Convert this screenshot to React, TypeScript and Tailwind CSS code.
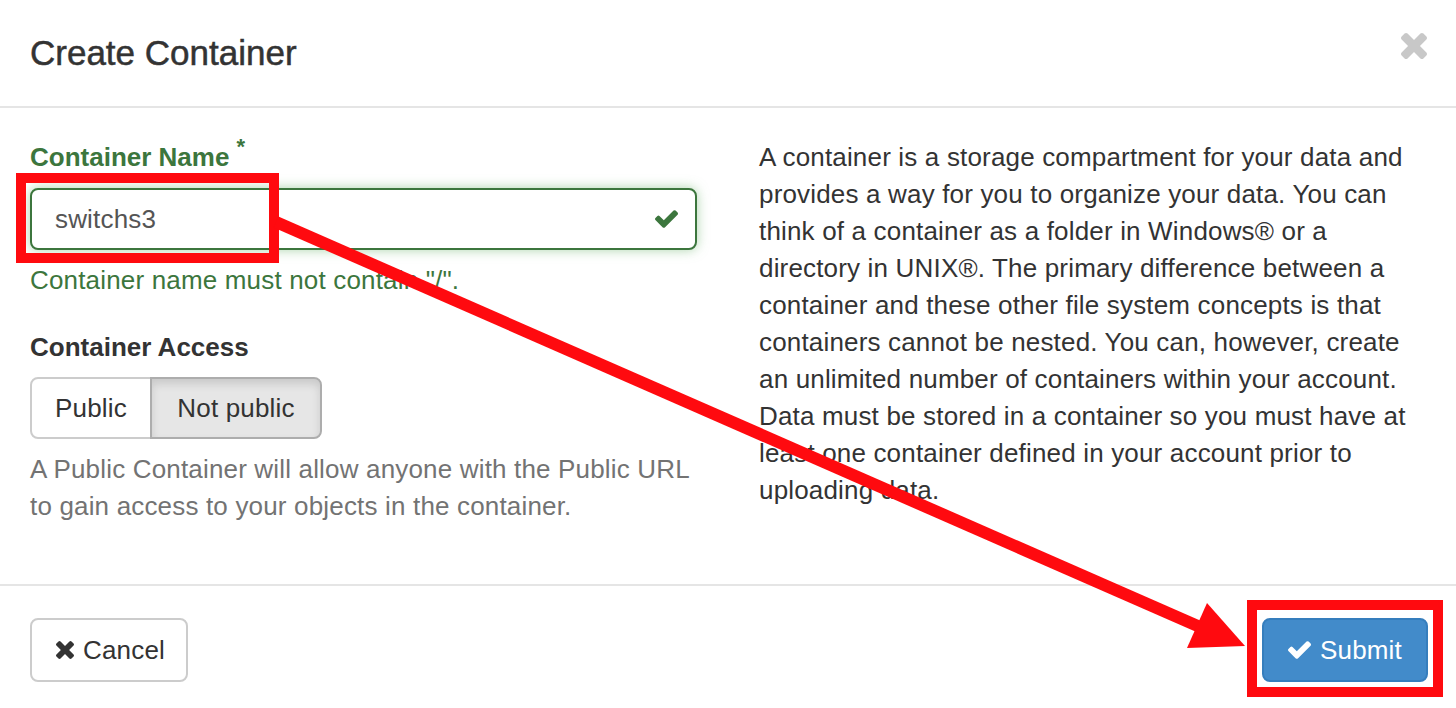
import React from 'react';

function TimesIcon({ className }: { className?: string }) {
    return (
        <svg viewBox="302 366 1188 1188" className={className} fill="currentColor">
            <path d="M1490 1322q0 40-28 68l-136 136q-28 28-68 28t-68-28l-294-294-294 294q-28 28-68 28t-68-28l-136-136q-28-28-28-68t28-68l294-294-294-294q-28-28-28-68t28-68l136-136q28-28 68-28t68 28l294 294 294-294q28-28 68-28t68 28l136 136q28 28 28 68t-28 68l-294 294 294 294q28 28 28 68z" />
        </svg>
    );
}

function CheckIcon({ className }: { className?: string }) {
    return (
        <svg viewBox="121 334 1550 1188" className={className} fill="currentColor">
            <path d="M1671 566q0 40-28 68l-724 724-136 136q-28 28-68 28t-68-28l-136-136-362-362q-28-28-28-68t28-68l136-136q28-28 68-28t68 28l294 295 656-657q28-28 68-28t68 28l136 136q28 28 28 68z" />
        </svg>
    );
}

function Annotations() {
    return (
        <svg className="pointer-events-none absolute inset-0" width="1456" height="708" viewBox="0 0 1456 708">
            <rect x="21" y="178" width="253" height="80" fill="none" stroke="#ff0a0f" strokeWidth="10" />
            <rect x="1252" y="605" width="186" height="87" fill="none" stroke="#ff0a0f" strokeWidth="10" />
            <line x1="276" y1="222" x2="1200" y2="627" stroke="#ff0a0f" strokeWidth="12" />
            <polygon points="1207,603 1245,646 1187,648" fill="#ff0a0f" />
        </svg>
    );
}

export default function App() {
    return (
        <div className="relative h-[708px] w-full overflow-hidden bg-white font-['Liberation_Sans',Arial,sans-serif] text-[26px] leading-[37px] tracking-[0.17px] text-[#333]">
            {/* header */}
            <div className="flex h-[108px] items-center justify-between border-b-2 border-[#e5e5e5] pl-[30px] pr-[29px]">
                <h4 className="text-[35px] leading-[40px] tracking-normal text-[#333] [-webkit-text-stroke:0.5px_#333]">Create Container</h4>
                <button className="mb-[14px] text-[#c8c8c8]">
                    <TimesIcon className="h-[26px] w-[26px]" />
                </button>
            </div>

            {/* body */}
            <div className="grid grid-cols-2 gap-x-[62px] px-[30px] pt-[31px] pb-[59px]">
                <div className="flex flex-col">
                    <label className="font-bold tracking-normal text-[#3c763d]">
                        Container Name
                        <span className="relative -top-[12px] ml-[7px] text-[22px]">*</span>
                    </label>
                    <div className="mt-[11px] flex h-[62px] items-center justify-between rounded-[8px] border-2 border-[#3c763d] bg-white pl-[23px] pr-[17px] shadow-[0_0_12px_rgba(103,177,104,0.55)]">
                        <span className="text-[#555]">switchs3</span>
                        <CheckIcon className="h-[18px] w-[23px] text-[#3c763d]" />
                    </div>
                    <p className="mt-[12px] text-[#3c763d]">Container name must not contain "/".</p>

                    <label className="mt-[30px] font-bold tracking-normal text-[#333]">Container Access</label>
                    <div className="mt-[11px] flex h-[62px] w-[292px]">
                        <button className="w-[122px] rounded-l-[8px] border-2 border-[#ccc] bg-white text-[#333]">Public</button>
                        <button className="-ml-[2px] w-[172px] rounded-r-[8px] border-2 border-[#adadad] bg-[#e6e6e6] text-[#333] shadow-[inset_0_5px_9px_rgba(0,0,0,0.125)]">
                            Not public
                        </button>
                    </div>
                    <p className="mt-[12px] text-[#737373]">
                        A Public Container will allow anyone with the Public URL to gain access to your objects in the container.
                    </p>
                </div>

                <div>
                    <p className="text-[#333]">
                        A container is a storage compartment for your data and provides a way for you to organize your data. You can think of a
                        container as a folder in Windows® or a directory in UNIX®. The primary difference between a container and these other file
                        system concepts is that containers cannot be nested. You can, however, create an unlimited number of containers within your
                        account. Data must be stored in a container so you must have at least one container defined in your account prior to
                        uploading data.
                    </p>
                </div>
            </div>

            {/* footer */}
            <div className="flex items-start justify-between border-t-2 border-[#e5e5e5] pt-[32px] pl-[30px] pr-[28px]">
                <button className="flex h-[64px] w-[158px] items-center gap-[9px] rounded-[8px] border-2 border-[#ccc] bg-white pl-[24px] text-[#333]">
                    <TimesIcon className="h-[18px] w-[18px]" />
                    Cancel
                </button>
                <button className="flex h-[64px] w-[166px] items-center gap-[9px] rounded-[8px] border-2 border-[#357ebd] bg-[#428bca] pl-[24px] text-white">
                    <CheckIcon className="h-[18px] w-[23px]" />
                    Submit
                </button>
            </div>

            <Annotations />
        </div>
    );
}
